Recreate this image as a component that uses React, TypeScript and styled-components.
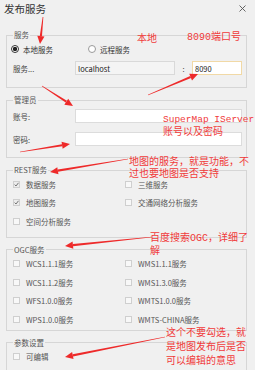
import React from 'react';
import styled, { createGlobalStyle } from 'styled-components';

const Global = createGlobalStyle`
  html, body { margin: 0; padding: 0; background: #f0f0f0; }
  body { font-family: "Noto Sans CJK SC", "Liberation Sans", sans-serif; }
`;

const Dialog = styled.div`
  position: relative;
  width: 255px;
  height: 370px;
  overflow: hidden;
  background: #f0f0f0;
  color: #444;
  font-size: 7.5px;
`;

const TitleBar = styled.div`
  display: flex;
  align-items: center;
  justify-content: space-between;
  height: 16px;
  padding: 0 9px 0 4px;
  font-size: 10.5px;
  color: #333;
`;

const Body = styled.div`
  display: flex;
  flex-direction: column;
  gap: 7px;
  padding: 14px 8px 0 6px;
`;

const Group = styled.fieldset<{ $pt?: number; $pb?: number }>`
  margin: 0;
  min-width: 0;
  padding: ${(p) => p.$pt ?? 0}px 4px ${(p) => p.$pb ?? 0}px 6px;
  border: 1px solid #d6d6d6;
`;

const Legend = styled.legend`
  padding: 0 1px;
  font-size: 7.5px;
  line-height: 10px;
  color: #555;
`;

const RadioRow = styled.div`
  display: grid;
  grid-template-columns: 77px 1fr;
  align-items: center;
  height: 18px;
`;

const RadioItem = styled.label`
  display: flex;
  align-items: center;
  gap: 4px;
  margin-left: -2px;
  color: #333;
`;

const RadioDot = styled.span<{ $on?: boolean }>`
  box-sizing: border-box;
  width: 8px;
  height: 8px;
  border-radius: 50%;
  border: 1px solid ${(p) => (p.$on ? '#333' : '#9a9a9a')};
  background: ${(p) => (p.$on ? 'radial-gradient(circle, #222 0 2px, #fff 2.3px)' : '#fff')};
`;

const FieldRow = styled.div<{ $cols: string; $mt?: number }>`
  display: grid;
  grid-template-columns: ${(p) => p.$cols};
  align-items: center;
  height: 18px;
  margin-top: ${(p) => p.$mt ?? 0}px;
`;

const Label = styled.span`
  color: #444;
`;

const Colon = styled.span`
  text-align: center;
  color: #444;
`;

const Field = styled.input<{ $tone?: 'disabled' | 'focus' | 'plain' }>`
  box-sizing: border-box;
  width: 100%;
  height: 14px;
  margin: 0;
  padding: 0 2px;
  font-family: "Noto Sans CJK SC", "Liberation Sans", sans-serif;
  font-size: 7.5px;
  color: #222;
  outline: none;
  border: 1px solid
    ${(p) => (p.$tone === 'focus' ? '#f1d9a6' : p.$tone === 'disabled' ? '#d9d9d9' : '#dcdcdc')};
  background: ${(p) => (p.$tone === 'disabled' ? '#f4f4f4' : '#fff')};
`;

const Stack = styled.div`
  display: flex;
  flex-direction: column;
  gap: 5px;
`;

const CheckGrid = styled.div`
  display: grid;
  grid-template-columns: 112px 1fr;
  grid-auto-rows: 18.5px;
  align-items: center;
`;

const CheckItem = styled.label`
  display: flex;
  align-items: center;
  gap: 6px;
  color: #555;
  white-space: nowrap;
`;

const Box = styled.span<{ $on?: boolean }>`
  box-sizing: border-box;
  display: flex;
  align-items: center;
  justify-content: center;
  width: 7px;
  height: 7px;
  border: 1px solid #cfcfcf;
  background: ${(p) => (p.$on ? '#ececec' : '#f8f8f8')};
`;

const Overlay = styled.svg`
  position: absolute;
  left: 0;
  top: 0;
  pointer-events: none;
`;

const Note = styled.div<{ $x: number; $y: number; $lh?: number }>`
  position: absolute;
  left: ${(p) => p.$x}px;
  top: ${(p) => p.$y}px;
  font-family: "Liberation Mono", "Noto Sans CJK SC", monospace;
  font-size: 10px;
  line-height: ${(p) => p.$lh ?? 13}px;
  color: #f03a3a;
  white-space: pre;
  pointer-events: none;
`;

const Mono = styled.span`
  font-size: 9.5px;
`;

function Check({ on, children }: { on?: boolean; children: React.ReactNode }) {
  return (
    <CheckItem>
      <Box $on={on}>
        {on && (
          <svg width="5" height="5" viewBox="0 0 5 5">
            <path d="M0.6 2.6 L2 4 L4.5 0.8" fill="none" stroke="#666" strokeWidth="0.9" />
          </svg>
        )}
      </Box>
      {children}
    </CheckItem>
  );
}

function Arrow({ x1, y1, x2, y2 }: { x1: number; y1: number; x2: number; y2: number }) {
  const dx = x2 - x1;
  const dy = y2 - y1;
  const len = Math.hypot(dx, dy);
  const ux = dx / len;
  const uy = dy / len;
  const nx = -uy;
  const ny = ux;
  const L = 8;
  const W = 3.6;
  const bx = x2 - ux * L;
  const by = y2 - uy * L;
  const t0 = 0.35;
  const t1 = 1.1;
  const shaft = [
    [x1 + nx * t0, y1 + ny * t0],
    [bx + nx * t1, by + ny * t1],
    [bx - nx * t1, by - ny * t1],
    [x1 - nx * t0, y1 - ny * t0],
  ]
    .map((p) => p.join(','))
    .join(' ');
  const head = [
    [x2, y2],
    [bx + nx * W, by + ny * W],
    [bx - nx * W, by - ny * W],
  ]
    .map((p) => p.join(','))
    .join(' ');
  return (
    <g fill="#ee2a2a">
      <polygon points={shaft} />
      <polygon points={head} />
    </g>
  );
}

export default function App() {
  return (
    <>
      <Global />
      <Dialog>
        <TitleBar>
          <span>发布服务</span>
          <svg width="7" height="7" viewBox="0 0 7 7">
            <path d="M0.5 0.5 L6.5 6.5 M6.5 0.5 L0.5 6.5" stroke="#555" strokeWidth="0.9" />
          </svg>
        </TitleBar>
        <Body>
          <Group $pb={10}>
            <Legend>服务</Legend>
            <RadioRow>
              <RadioItem>
                <RadioDot $on />
                本地服务
              </RadioItem>
              <RadioItem>
                <RadioDot />
                远程服务
              </RadioItem>
            </RadioRow>
            <FieldRow $cols="62px 100px 17px 1fr" $mt={1}>
              <Label>服务...</Label>
              <Field $tone="disabled" readOnly value="localhost" />
              <Colon>:</Colon>
              <Field $tone="focus" readOnly value="8090" />
            </FieldRow>
          </Group>

          <Group $pt={2} $pb={9}>
            <Legend>管理员</Legend>
            <Stack>
              <FieldRow $cols="62px 1fr">
                <Label>账号:</Label>
                <Field $tone="plain" readOnly value="" />
              </FieldRow>
              <FieldRow $cols="62px 1fr">
                <Label>密码:</Label>
                <Field $tone="plain" readOnly value="" />
              </FieldRow>
            </Stack>
          </Group>

          <Group $pb={6}>
            <Legend>REST服务</Legend>
            <CheckGrid>
              <Check on>数据服务</Check>
              <Check>三维服务</Check>
              <Check on>地图服务</Check>
              <Check>交通网络分析服务</Check>
              <Check>空间分析服务</Check>
            </CheckGrid>
          </Group>

          <Group $pb={1}>
            <Legend>OGC服务</Legend>
            <CheckGrid>
              <Check>WCS1.1.1服务</Check>
              <Check>WMS1.1.1服务</Check>
              <Check>WCS1.1.2服务</Check>
              <Check>WMS1.3.0服务</Check>
              <Check>WFS1.0.0服务</Check>
              <Check>WMTS1.0.0服务</Check>
              <Check>WPS1.0.0服务</Check>
              <Check>WMTS-CHINA服务</Check>
            </CheckGrid>
          </Group>

          <Group $pb={10}>
            <Legend>参数设置</Legend>
            <CheckGrid>
              <Check>可编辑</Check>
            </CheckGrid>
          </Group>
        </Body>

        <Note $x={137} $y={33}>本地</Note>
        <Note $x={187} $y={31}>8090端口号</Note>
        <Note $x={163} $y={114} $lh={12.5}>
          <Mono>SuperMap IServer</Mono>
          {'\n'}账号以及密码
        </Note>
        <Note $x={129} $y={157} $lh={11.5}>
          {'地图的服务，就是功能，不\n过也要地图是否支持'}
        </Note>
        <Note $x={150} $y={232}>{'百度搜索OGC，详细了\n解'}</Note>
        <Note $x={166} $y={327} $lh={14}>
          {'这个不要勾选，就\n是地图发布后是否\n可以编辑的意思'}
        </Note>

        <Overlay width="255" height="370" viewBox="0 0 255 370">
          <Arrow x1={43} y1={17} x2={40} y2={44} />
          <Arrow x1={148} y1={95} x2={198} y2={74} />
          <Arrow x1={42} y1={86} x2={73} y2={106} />
          <Arrow x1={20} y1={152} x2={70} y2={144} />
          <Arrow x1={128} y1={159} x2={50} y2={172} />
          <Arrow x1={152} y1={237} x2={65} y2={246} />
          <Arrow x1={165} y1={337} x2={65} y2={357} />
        </Overlay>
      </Dialog>
    </>
  );
}
